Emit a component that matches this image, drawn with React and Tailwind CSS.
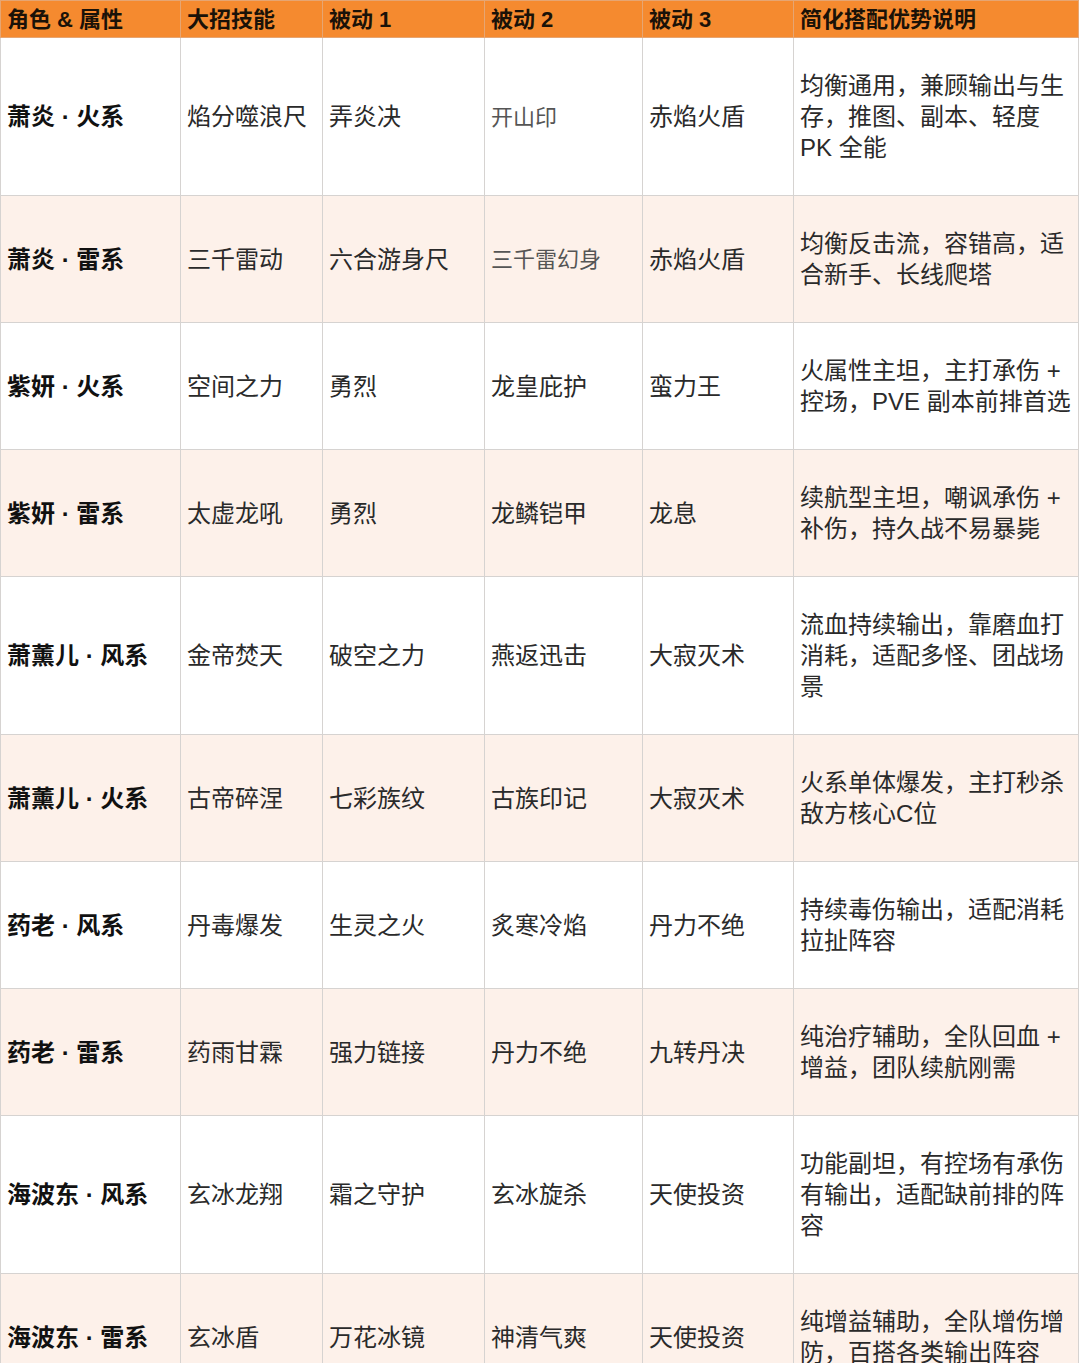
import React from 'react';

const headers = ['角色 & 属性', '大招技能', '被动 1', '被动 2', '被动 3', '简化搭配优势说明'];

const rows = [
  { role: '萧炎 · 火系', ult: '焰分噬浪尺', p1: '弄炎决', p2: '开山印', p3: '赤焰火盾', desc: ['均衡通用，兼顾输出与生', '存，推图、副本、轻度', 'PK 全能'], faint: true },
  { role: '萧炎 · 雷系', ult: '三千雷动', p1: '六合游身尺', p2: '三千雷幻身', p3: '赤焰火盾', desc: ['均衡反击流，容错高，适', '合新手、长线爬塔'], faint: true },
  { role: '紫妍 · 火系', ult: '空间之力', p1: '勇烈', p2: '龙皇庇护', p3: '蛮力王', desc: ['火属性主坦，主打承伤 +', '控场，PVE 副本前排首选'] },
  { role: '紫妍 · 雷系', ult: '太虚龙吼', p1: '勇烈', p2: '龙鳞铠甲', p3: '龙息', desc: ['续航型主坦，嘲讽承伤 +', '补伤，持久战不易暴毙'] },
  { role: '萧薰儿 · 风系', ult: '金帝焚天', p1: '破空之力', p2: '燕返迅击', p3: '大寂灭术', desc: ['流血持续输出，靠磨血打', '消耗，适配多怪、团战场', '景'] },
  { role: '萧薰儿 · 火系', ult: '古帝碎涅', p1: '七彩族纹', p2: '古族印记', p3: '大寂灭术', desc: ['火系单体爆发，主打秒杀', '敌方核心C位'] },
  { role: '药老 · 风系', ult: '丹毒爆发', p1: '生灵之火', p2: '炙寒冷焰', p3: '丹力不绝', desc: ['持续毒伤输出，适配消耗', '拉扯阵容'] },
  { role: '药老 · 雷系', ult: '药雨甘霖', p1: '强力链接', p2: '丹力不绝', p3: '九转丹决', desc: ['纯治疗辅助，全队回血 +', '增益，团队续航刚需'] },
  { role: '海波东 · 风系', ult: '玄冰龙翔', p1: '霜之守护', p2: '玄冰旋杀', p3: '天使投资', desc: ['功能副坦，有控场有承伤', '有输出，适配缺前排的阵', '容'] },
  { role: '海波东 · 雷系', ult: '玄冰盾', p1: '万花冰镜', p2: '神清气爽', p3: '天使投资', desc: ['纯增益辅助，全队增伤增', '防，百搭各类输出阵容'] },
];

const font = { fontFamily: '"Liberation Sans", "Noto Sans CJK SC", sans-serif' };

export default function App() {
  return (
    <div className="bg-white w-[1080px]" style={font}>
      <table className="table-fixed border-collapse w-[1079px] text-[#222]">
        <colgroup>
          <col className="w-[180px]" />
          <col className="w-[142px]" />
          <col className="w-[162px]" />
          <col className="w-[158px]" />
          <col className="w-[151px]" />
          <col />
        </colgroup>
        <thead>
          <tr className="bg-[#F58A2F] h-[37px]">
            {headers.map((h) => (
              <th
                key={h}
                className="border border-[#e6a572] px-[6px] pt-[1px] text-left align-middle text-[22px] leading-[28px] font-bold text-[#1a1208] whitespace-nowrap"
              >
                {h}
              </th>
            ))}
          </tr>
        </thead>
        <tbody>
          {rows.map((r, i) => (
            <tr key={r.role} className={i % 2 === 1 ? 'bg-[#FDF1EA]' : 'bg-white'}>
              <td className="border border-[#d6d3d1] px-[6px] pt-[1px] align-middle text-[24px] font-bold text-[#111] whitespace-nowrap">
                {r.role}
              </td>
              <td className="border border-[#d6d3d1] px-[6px] pt-[1px] align-middle text-[24px] text-[#2a2a2a] whitespace-nowrap">
                {r.ult}
              </td>
              <td className="border border-[#d6d3d1] px-[6px] pt-[1px] align-middle text-[24px] text-[#2a2a2a] whitespace-nowrap">
                {r.p1}
              </td>
              <td
                className={`border border-[#d6d3d1] px-[6px] pt-[1px] align-middle whitespace-nowrap ${
                  r.faint ? 'text-[22px] text-[#555]' : 'text-[24px] text-[#2a2a2a]'
                }`}
              >
                {r.p2}
              </td>
              <td className="border border-[#d6d3d1] px-[6px] pt-[1px] align-middle text-[24px] text-[#2a2a2a] whitespace-nowrap">
                {r.p3}
              </td>
              <td className="border border-[#d6d3d1] pl-[6px] pr-[4px] py-[32px] align-middle text-[24px] leading-[31px] text-[#2a2a2a] overflow-hidden">
                {r.desc.map((line) => (
                  <div key={line} className="whitespace-nowrap">
                    {line}
                  </div>
                ))}
              </td>
            </tr>
          ))}
        </tbody>
      </table>
    </div>
  );
}
